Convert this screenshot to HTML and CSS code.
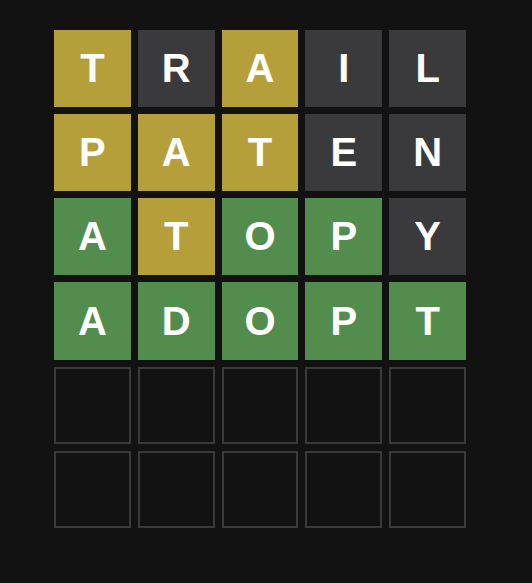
FILE: index.html
```html
<!DOCTYPE html>
<html>
<head>
<meta charset="utf-8">
<link rel="stylesheet" href="styles.css">
</head>
<body>
<div class="board">
  <div class="tile present">T</div><div class="tile absent">R</div><div class="tile present">A</div><div class="tile absent">I</div><div class="tile absent">L</div>
  <div class="tile present">P</div><div class="tile present">A</div><div class="tile present">T</div><div class="tile absent">E</div><div class="tile absent">N</div>
  <div class="tile correct">A</div><div class="tile present">T</div><div class="tile correct">O</div><div class="tile correct">P</div><div class="tile absent">Y</div>
  <div class="tile correct">A</div><div class="tile correct">D</div><div class="tile correct">O</div><div class="tile correct">P</div><div class="tile correct">T</div>
  <div class="tile empty"></div><div class="tile empty"></div><div class="tile empty"></div><div class="tile empty"></div><div class="tile empty"></div>
  <div class="tile empty"></div><div class="tile empty"></div><div class="tile empty"></div><div class="tile empty"></div><div class="tile empty"></div>
</div>
</body>
</html>
```
FILE: styles.css
```css
html, body {
  margin: 0;
  padding: 0;
  background: #121212;
  height: 100%;
}
body {
  padding: 30px 0 0 54px;
  box-sizing: border-box;
  font-family: "Liberation Sans", Arial, sans-serif;
}
.board {
  display: grid;
  grid-template-columns: repeat(5, 1fr);
  grid-template-rows: repeat(6, 1fr);
  gap: 7px;
  width: 412px;
  height: 498px;
}
.tile {
  display: flex;
  align-items: center;
  justify-content: center;
  color: #ffffff;
  font-weight: bold;
  font-size: 40px;
  box-sizing: border-box;
}
.present { background: #b59f3b; }
.absent { background: #3a3a3c; }
.correct { background: #538d4e; }
.empty { border: 2px solid #3a3a3c; }
```
